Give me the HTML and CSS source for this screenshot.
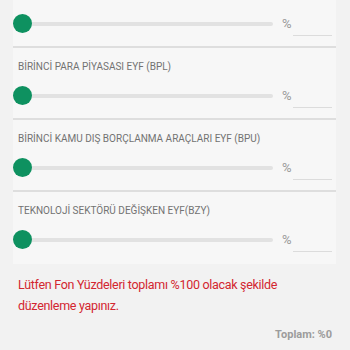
FILE: index.html
```html
<!DOCTYPE html>
<html lang="tr">
<head>
    <meta charset="UTF-8">
    <title>Fon Dağılımı</title>
    <link rel="stylesheet" href="styles.css">
</head>
<body>
<div class="fund_list">
    <div class="fund first">
        <div class="fund_row">
            <input type="range" min="0" max="100" value="0" class="slider">
            <span class="percent">%</span>
            <input type="text" class="fund_value">
        </div>
    </div>
    <div class="fund">
        <p class="fund_name">BİRİNCİ PARA PİYASASI EYF (BPL)</p>
        <div class="fund_row">
            <input type="range" min="0" max="100" value="0" class="slider">
            <span class="percent">%</span>
            <input type="text" class="fund_value">
        </div>
    </div>
    <div class="fund">
        <p class="fund_name">BİRİNCİ KAMU DIŞ BORÇLANMA ARAÇLARI EYF (BPU)</p>
        <div class="fund_row">
            <input type="range" min="0" max="100" value="0" class="slider">
            <span class="percent">%</span>
            <input type="text" class="fund_value">
        </div>
    </div>
    <div class="fund last">
        <p class="fund_name">TEKNOLOJİ SEKTÖRÜ DEĞİŞKEN EYF(BZY)</p>
        <div class="fund_row">
            <input type="range" min="0" max="100" value="0" class="slider">
            <span class="percent">%</span>
            <input type="text" class="fund_value">
        </div>
    </div>
</div>

<p class="warning">Lütfen Fon Yüzdeleri toplamı %100 olacak şekilde düzenleme yapınız.</p>

<p class="total">Toplam: %0</p>
</body>
</html>
```

FILE: styles.css
```css
body {
  margin: 0 14px 0 13px;
  background: #f2f2f2;
  font-family: Roboto, "Noto Sans", sans-serif;
}

.fund {
  background: #f7f7f7;
  padding-top: 13px;
  border-bottom: 2px solid #dedede;
}

.fund.first {
  padding-top: 1px;
}

.fund.last {
  border-bottom: none;
  padding-bottom: 2px;
}

.fund_name {
  margin: 0 0 0 5px;
  height: 12px;
  line-height: 12px;
  font-size: 10px;
  color: #727272;
}

.fund_row {
  display: flex;
  align-items: center;
  height: 45px;
}

.slider {
  -webkit-appearance: none;
  appearance: none;
  flex: 1;
  margin: 0 9px 0 0;
  height: 4px;
  border-radius: 2px;
  background: #e2e2e2;
  outline: none;
}

.slider::-webkit-slider-thumb {
  -webkit-appearance: none;
  appearance: none;
  width: 19px;
  height: 19px;
  border-radius: 50%;
  background: #0e9160;
  cursor: pointer;
}

.percent {
  width: 11px;
  font-size: 13px;
  color: #9a9a9a;
}

.fund_value {
  align-self: flex-start;
  width: 39px;
  height: 35px;
  margin: 0 4px 0 0;
  padding: 0;
  border: none;
  border-bottom: 1px solid #dcdcdc;
  background: transparent;
  box-sizing: border-box;
}

.warning {
  margin: 10px 0 0 5px;
  width: 300px;
  font-size: 12.5px;
  line-height: 21px;
  letter-spacing: -0.3px;
  color: #d32630;
}

.total {
  margin: 12px 4px 0 0;
  text-align: right;
  font-size: 11px;
  font-weight: bold;
  color: #9c9c9c;
}
```
